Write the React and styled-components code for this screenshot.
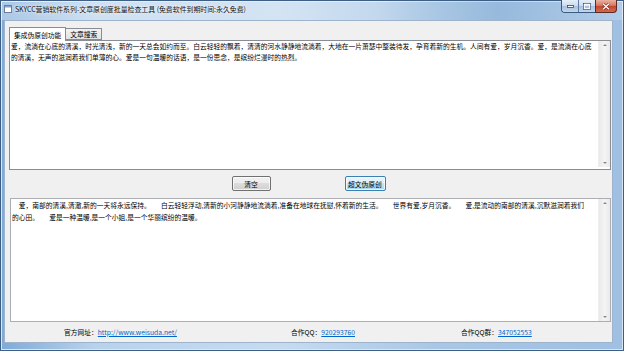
import React from 'react'
import styled, { createGlobalStyle } from 'styled-components'

const GlobalStyle = createGlobalStyle`
  html, body {
    margin: 0;
    padding: 0;
  }
  body {
    width: 624px;
    height: 351px;
    overflow: hidden;
    font-family: "Noto Sans CJK SC", "Noto Sans", sans-serif;
  }
`

const Window = styled.div`
  box-sizing: border-box;
  width: 624px;
  height: 351px;
  display: flex;
  flex-direction: column;
  border: 1px solid #3d5f86;
  background: linear-gradient(to right, #7eaad8 0%, #b9d2ec 15%, #c6dbf0 45%, #a9c7e5 70%, #9fc0e3 100%);
  box-shadow: inset 0 0 0 1px #d9e7f5;
`

const TitleBar = styled.div`
  height: 19px;
  display: flex;
  align-items: flex-start;
  background: linear-gradient(to right, rgba(255,255,255,0.35), rgba(255,255,255,0.2) 60%, rgba(90,140,190,0.2) 80%, rgba(255,255,255,0.2));
`

const AppIcon = styled.svg`
  margin: 4px 0 0 3px;
  flex: none;
`

const Title = styled.div`
  margin-left: 3px;
  font-size: 6.9px;
  line-height: 17px;
  color: #111;
  white-space: nowrap;
  text-shadow: 0 0 4px rgba(255, 255, 255, 0.9), 0 0 2px rgba(255, 255, 255, 0.9);
`

const Controls = styled.div`
  margin: -1px 6px 0 auto;
  display: flex;
  height: 13px;
`

const CtrlGroup = styled.div`
  display: flex;
  border: 1px solid #3b5a82;
  border-top: none;
  border-right: none;
  border-bottom-left-radius: 4px;
  overflow: hidden;
`

const CtrlButton = styled.div`
  box-sizing: border-box;
  width: ${p => p.$w}px;
  height: 12px;
  display: flex;
  align-items: center;
  justify-content: center;
  background: linear-gradient(#e6eff9, #c9dbef 48%, #a8c1df 52%, #c2d7ee);
  border-left: ${p => (p.$first ? 'none' : '1px solid #5a7aa3')};
`

const CloseButton = styled.div`
  box-sizing: border-box;
  width: 22px;
  height: 13px;
  display: flex;
  align-items: center;
  justify-content: center;
  border: 1px solid #5b2a22;
  border-top: none;
  border-bottom-right-radius: 4px;
  background: linear-gradient(#eab0a2, #d77a63 45%, #c4452b 52%, #d46a50);
`

const Client = styled.div`
  flex: 1;
  margin: 0 10px 7px 3px;
  display: flex;
  flex-direction: column;
  background: #f0f0f0;
  border: 1px solid #9db4cc;
  font-size: 6.75px;
  color: #000;
`

const TabStrip = styled.div`
  display: flex;
  align-items: flex-end;
  height: 13px;
  margin: 6px 1px 0 4px;
`

const Tab = styled.div`
  box-sizing: border-box;
  height: ${p => (p.$active ? 14 : 12)}px;
  padding: 0 4px;
  margin-bottom: ${p => (p.$active ? -1 : 0)}px;
  display: flex;
  align-items: center;
  border: 1px solid #898c95;
  border-bottom: ${p => (p.$active ? 'none' : '1px solid #898c95')};
  border-left: ${p => (p.$first ? '1px solid #898c95' : 'none')};
  background: ${p => (p.$active ? '#fff' : 'linear-gradient(#f3f3f3, #e2e2e2)')};
  position: relative;
  z-index: ${p => (p.$active ? 1 : 0)};
  white-space: nowrap;
`

const TabPage = styled.div`
  height: 128px;
  margin: 0 1px 0 4px;
  border: 1px solid #898c95;
  background: #fff;
  display: flex;
`

const TextBox = styled.div`
  box-sizing: border-box;
  height: ${p => p.$h}px;
  margin: ${p => p.$m};
  display: flex;
  background: #fff;
  border: ${p => (p.$framed ? '1px solid #abadb3' : 'none')};
  flex: ${p => (p.$grow ? 1 : 'none')};
`

const TextContent = styled.div`
  flex: 1;
  padding: 0 2px 0 1px;
  line-height: ${p => p.$lh}px;
  white-space: pre;
  overflow: hidden;
`

const ScrollBar = styled.div`
  width: 11px;
  display: flex;
  flex-direction: column;
  justify-content: space-between;
  align-items: center;
  padding: 3px 0;
  background: linear-gradient(to right, #e9e9e9, #f4f4f4 50%, #e9e9e9);
  border-left: 1px solid #efefef;
`

const Arrow = styled.div`
  width: 0;
  height: 0;
  border-left: 2px solid transparent;
  border-right: 2px solid transparent;
  border-${p => (p.$up ? 'bottom' : 'top')}: 2px solid #8a8a8a;
`

const ButtonBar = styled.div`
  height: 28px;
  display: flex;
  justify-content: center;
  align-items: flex-start;
  gap: 74px;
  padding: 6px 0 0 0;
  box-sizing: border-box;
`

const Button = styled.button`
  box-sizing: border-box;
  width: ${p => p.$w}px;
  height: 15px;
  padding: 0;
  font-family: inherit;
  font-size: 6.75px;
  color: #000;
  border-radius: 2px;
  border: 1px solid ${p => (p.$focused ? '#3c7fb1' : '#707070')};
  background: ${p =>
    p.$focused
      ? 'linear-gradient(#eaf6fd, #d9f0fc 50%, #bee6fd 50%, #a7d9f5)'
      : 'linear-gradient(#f2f2f2, #ebebeb 50%, #dddddd 50%, #cfcfcf)'};
  box-shadow: inset 0 0 0 1px rgba(255, 255, 255, 0.7);
`

const Footer = styled.div`
  flex: 1;
  display: grid;
  grid-template-columns: 227px 170px 1fr;
  align-items: center;
  padding-left: 59px;
  white-space: nowrap;
`

const Link = styled.a`
  color: #0066cc;
  text-decoration: underline;
`

const topLines = [
  '爱，流淌在心底的清溪，时光清浅，新的一天总会如约而至。白云轻轻的飘着，清清的河水静静地流淌着，大地在一片萧瑟中整装待发，孕育着新的生机。人间有爱，岁月沉香。爱，是流淌在心底',
  '的清溪，无声的滋润着我们单薄的心。爱是一句温暖的话语，是一份思念，是缤纷烂漫时的热烈。',
]

const bottomLines = [
  '\u3000爱，南部的清溪,清澈,新的一天将永远保持。\u3000\u3000白云轻轻浮动,清新的小河静静地流淌着,准备在地球在抚慰,怀着新的生活。\u3000\u3000世界有爱,岁月沉香。\u3000\u3000爱,是流动的南部的清溪,沉默滋润着我们',
  '的心田。\u3000\u3000爱是一种温暖,是一个小姐,是一个华丽缤纷的温暖。',
]

function Scroll() {
  return (
    <ScrollBar>
      <Arrow $up />
      <Arrow />
    </ScrollBar>
  )
}

export default function App() {
  return (
    <>
      <GlobalStyle />
      <Window>
        <TitleBar>
          <AppIcon width="8" height="8" viewBox="0 0 8 8">
            <rect x="0.5" y="0.5" width="7" height="7" fill="#fff" stroke="#6d7f95" />
            <rect x="1" y="1" width="6" height="1.5" fill="#7fa6d3" />
          </AppIcon>
          <Title>SKYCC营销软件系列-文章原创度批量检查工具 (免费软件到期时间:永久免费)</Title>
          <Controls>
            <CtrlGroup>
              <CtrlButton $w={16} $first>
                <svg width="7" height="4" viewBox="0 0 7 4">
                  <rect x="0.5" y="1.5" width="6" height="2" fill="#fff" stroke="#34496a" strokeWidth="0.8" />
                </svg>
              </CtrlButton>
              <CtrlButton $w={17}>
                <svg width="8" height="7" viewBox="0 0 8 7">
                  <rect x="0.5" y="0.5" width="7" height="6" fill="none" stroke="#34496a" strokeWidth="0.8" />
                  <rect x="1.3" y="1.3" width="5.4" height="4.4" fill="none" stroke="#fff" strokeWidth="1" />
                  <rect x="1.3" y="1.3" width="5.4" height="1" fill="#fff" />
                </svg>
              </CtrlButton>
            </CtrlGroup>
            <CloseButton>
              <svg width="8" height="7" viewBox="0 0 8 7">
                <path d="M1 0.8 L7 6.2 M7 0.8 L1 6.2" stroke="#6b2418" strokeWidth="2.4" />
                <path d="M1 0.8 L7 6.2 M7 0.8 L1 6.2" stroke="#fff" strokeWidth="1.4" />
              </svg>
            </CloseButton>
          </Controls>
        </TitleBar>
        <Client>
          <TabStrip>
            <Tab $active $first>集成伪原创功能</Tab>
            <Tab>文章搜索</Tab>
          </TabStrip>
          <TabPage>
            <TextBox $grow $h={126} $m="0">
              <TextContent $lh={11}>
                {topLines.map(l => (
                  <div key={l}>{l}</div>
                ))}
              </TextContent>
              <Scroll />
            </TextBox>
          </TabPage>
          <ButtonBar>
            <Button $w={39}>清空</Button>
            <Button $w={41} $focused>超文伪原创</Button>
          </ButtonBar>
          <TextBox $framed $h={124} $m="0 1px 0 5px">
            <TextContent $lh={12}>
              {bottomLines.map(l => (
                <div key={l}>{l}</div>
              ))}
            </TextContent>
            <Scroll />
          </TextBox>
          <Footer>
            <span>
              官方网址：<Link href="#">http://www.weisuda.net/</Link>
            </span>
            <span>
              合作QQ：<Link href="#">920293760</Link>
            </span>
            <span>
              合作QQ群：<Link href="#">347052553</Link>
            </span>
          </Footer>
        </Client>
      </Window>
    </>
  )
}
